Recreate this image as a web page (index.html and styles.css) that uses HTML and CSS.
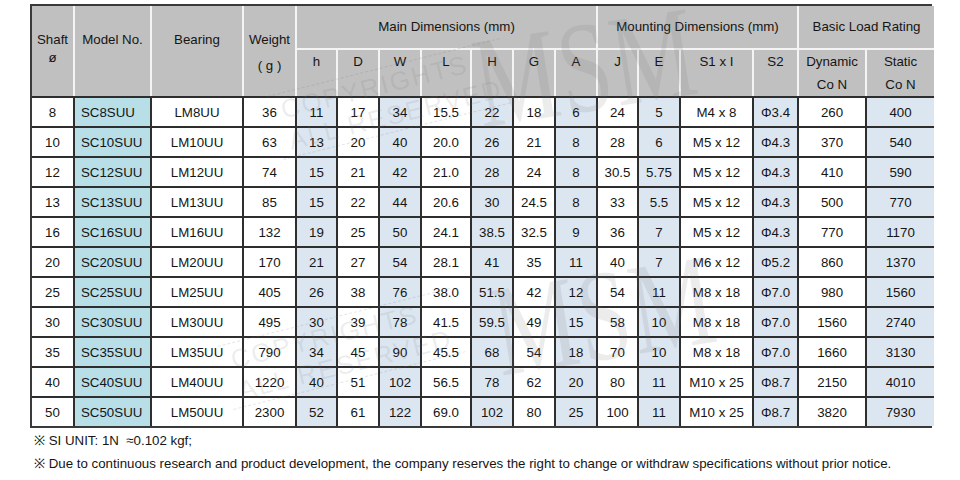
FILE: index.html
```html
<!DOCTYPE html>
<html>
<head>
<meta charset="utf-8">
<link rel="stylesheet" href="styles.css">
</head>
<body>
<div class="page">
  <div class="frame">
    <table class="spec">
      <colgroup>
        <col style="width:42px"><col style="width:77px"><col style="width:92px"><col style="width:53px">
        <col style="width:41px"><col style="width:42px"><col style="width:42px"><col style="width:50px">
        <col style="width:42px"><col style="width:42px"><col style="width:42px">
        <col style="width:41px"><col style="width:42px"><col style="width:73px"><col style="width:45px">
        <col style="width:68px"><col style="width:68px">
      </colgroup>
      <thead>
        <tr class="h1">
          <th rowspan="2" class="rs"><div>Shaft</div><div>ø</div></th>
          <th rowspan="2" class="rs"><div>Model No.</div></th>
          <th rowspan="2" class="rs"><div>Bearing</div></th>
          <th rowspan="2" class="rs"><div>Weight</div><div class="g">( g )</div></th>
          <th colspan="7" class="grp">Main Dimensions (mm)</th>
          <th colspan="4" class="grp">Mounting Dimensions (mm)</th>
          <th colspan="2" class="grp">Basic Load Rating</th>
        </tr>
        <tr class="h2">
          <th>h</th><th>D</th><th>W</th><th>L</th><th>H</th><th>G</th><th>A</th>
          <th>J</th><th>E</th><th>S1 x I</th><th>S2</th>
          <th>Dynamic<br>Co N</th><th>Static<br>Co N</th>
        </tr>
      </thead>
      <tbody>
        <tr><td>8</td><td class="m">SC8SUU</td><td>LM8UU</td><td>36</td><td class="b">11</td><td>17</td><td class="b">34</td><td>15.5</td><td class="b">22</td><td>18</td><td class="b">6</td><td>24</td><td class="b">5</td><td>M4 x 8</td><td class="b">Φ3.4</td><td>260</td><td class="b">400</td></tr>
        <tr><td>10</td><td class="m">SC10SUU</td><td>LM10UU</td><td>63</td><td class="b">13</td><td>20</td><td class="b">40</td><td>20.0</td><td class="b">26</td><td>21</td><td class="b">8</td><td>28</td><td class="b">6</td><td>M5 x 12</td><td class="b">Φ4.3</td><td>370</td><td class="b">540</td></tr>
        <tr><td>12</td><td class="m">SC12SUU</td><td>LM12UU</td><td>74</td><td class="b">15</td><td>21</td><td class="b">42</td><td>21.0</td><td class="b">28</td><td>24</td><td class="b">8</td><td>30.5</td><td class="b">5.75</td><td>M5 x 12</td><td class="b">Φ4.3</td><td>410</td><td class="b">590</td></tr>
        <tr><td>13</td><td class="m">SC13SUU</td><td>LM13UU</td><td>85</td><td class="b">15</td><td>22</td><td class="b">44</td><td>20.6</td><td class="b">30</td><td>24.5</td><td class="b">8</td><td>33</td><td class="b">5.5</td><td>M5 x 12</td><td class="b">Φ4.3</td><td>500</td><td class="b">770</td></tr>
        <tr><td>16</td><td class="m">SC16SUU</td><td>LM16UU</td><td>132</td><td class="b">19</td><td>25</td><td class="b">50</td><td>24.1</td><td class="b">38.5</td><td>32.5</td><td class="b">9</td><td>36</td><td class="b">7</td><td>M5 x 12</td><td class="b">Φ4.3</td><td>770</td><td class="b">1170</td></tr>
        <tr><td>20</td><td class="m">SC20SUU</td><td>LM20UU</td><td>170</td><td class="b">21</td><td>27</td><td class="b">54</td><td>28.1</td><td class="b">41</td><td>35</td><td class="b">11</td><td>40</td><td class="b">7</td><td>M6 x 12</td><td class="b">Φ5.2</td><td>860</td><td class="b">1370</td></tr>
        <tr><td>25</td><td class="m">SC25SUU</td><td>LM25UU</td><td>405</td><td class="b">26</td><td>38</td><td class="b">76</td><td>38.0</td><td class="b">51.5</td><td>42</td><td class="b">12</td><td>54</td><td class="b">11</td><td>M8 x 18</td><td class="b">Φ7.0</td><td>980</td><td class="b">1560</td></tr>
        <tr><td>30</td><td class="m">SC30SUU</td><td>LM30UU</td><td>495</td><td class="b">30</td><td>39</td><td class="b">78</td><td>41.5</td><td class="b">59.5</td><td>49</td><td class="b">15</td><td>58</td><td class="b">10</td><td>M8 x 18</td><td class="b">Φ7.0</td><td>1560</td><td class="b">2740</td></tr>
        <tr><td>35</td><td class="m">SC35SUU</td><td>LM35UU</td><td>790</td><td class="b">34</td><td>45</td><td class="b">90</td><td>45.5</td><td class="b">68</td><td>54</td><td class="b">18</td><td>70</td><td class="b">10</td><td>M8 x 18</td><td class="b">Φ7.0</td><td>1660</td><td class="b">3130</td></tr>
        <tr><td>40</td><td class="m">SC40SUU</td><td>LM40UU</td><td>1220</td><td class="b">40</td><td>51</td><td class="b">102</td><td>56.5</td><td class="b">78</td><td>62</td><td class="b">20</td><td>80</td><td class="b">11</td><td>M10 x 25</td><td class="b">Φ8.7</td><td>2150</td><td class="b">4010</td></tr>
        <tr><td>50</td><td class="m">SC50SUU</td><td>LM50UU</td><td>2300</td><td class="b">52</td><td>61</td><td class="b">122</td><td>69.0</td><td class="b">102</td><td>80</td><td class="b">25</td><td>100</td><td class="b">11</td><td>M10 x 25</td><td class="b">Φ8.7</td><td>3820</td><td class="b">7930</td></tr>
      </tbody>
    </table>
    <div class="wm wm1">MSM</div>
    <div class="wm cr1"><div>COPYRIGHTS</div><div>ALL RESERVED</div></div>
    <div class="wm wm2">MSM</div>
    <div class="wm cr2"><div>COPYRIGHTS</div><div>ALL RESERVED</div></div>
  </div>
  <div class="notes">
    <p>※ SI UNIT: 1N &nbsp;≈0.102 kgf;</p>
    <p>※ Due to continuous research and product development, the company reserves the right to change or withdraw specifications without prior notice.</p>
  </div>
</div>
</body>
</html>
```

FILE: styles.css
```css
html, body {
  margin: 0;
  padding: 0;
  background: #fff;
}
body {
  font-family: "Liberation Sans", Arial, sans-serif;
  font-size: 13.3px;
  color: #151515;
}
.page {
  padding: 4px 0 0 30px;
}
.frame {
  position: relative;
  width: 902px;
  border: 2px solid #3a3a3a;
  box-sizing: border-box;
}
.spec {
  width: 898px;
  table-layout: fixed;
  border-collapse: collapse;
  border-style: hidden;
}
.spec th {
  background: #c0c0c0;
  font-weight: normal;
  border: 2px solid #f4f4f4;
  padding: 0;
  text-align: center;
}
.spec th.rs {
  vertical-align: top;
  padding-top: 25px;
  line-height: 18px;
  border-bottom: 2px solid #2e2e2e;
}
.spec th.rs .g {
  margin-top: 8px;
}
.spec tr.h1 {
  height: 43px;
}
.spec th.grp {
  vertical-align: middle;
  padding-bottom: 1px;
}
.spec tr.h2 {
  height: 46px;
}
.spec tr.h2 th {
  vertical-align: top;
  padding-top: 0;
  line-height: 23px;
  border-bottom: 2px solid #2e2e2e;
}
.spec td {
  height: 28px;
  border: 2px solid #2e2e2e;
  padding: 0;
  text-align: center;
  vertical-align: middle;
  background: #fff;
  white-space: nowrap;
}
.spec td.m {
  background: #b8dee8;
  text-align: left;
  padding-left: 6px;
}
.spec td.b {
  background: #dce6f1;
}
.wm {
  position: absolute;
  pointer-events: none;
  color: rgba(110, 110, 110, 0.13);
  white-space: nowrap;
}
.wm1, .wm2 {
  font-family: "Liberation Serif", "DejaVu Serif", serif;
  font-size: 130px;
  line-height: 1;
  letter-spacing: 2px;
  transform-origin: left top;
}
.wm1 {
  left: 433px;
  top: 14px;
  transform: rotate(-9deg) scaleX(0.72);
}
.wm2 {
  left: 452px;
  top: 262px;
  transform: rotate(-9deg) scaleX(0.72);
}
.cr1, .cr2 {
  font-size: 26px;
  line-height: 32px;
  letter-spacing: 2px;
  border-top: 1px dashed rgba(110,110,110,0.18);
  border-bottom: 1px dashed rgba(110,110,110,0.18);
  padding: 0 10px;
}
.cr1 {
  left: 240px;
  top: 60px;
  transform: rotate(-14deg);
}
.cr2 {
  left: 190px;
  top: 310px;
  transform: rotate(-14deg);
}
.notes {
  padding-left: 4px;
}
.notes p {
  margin: 0;
  line-height: 23px;
}
.notes p:first-child {
  margin-top: 1px;
}
```
